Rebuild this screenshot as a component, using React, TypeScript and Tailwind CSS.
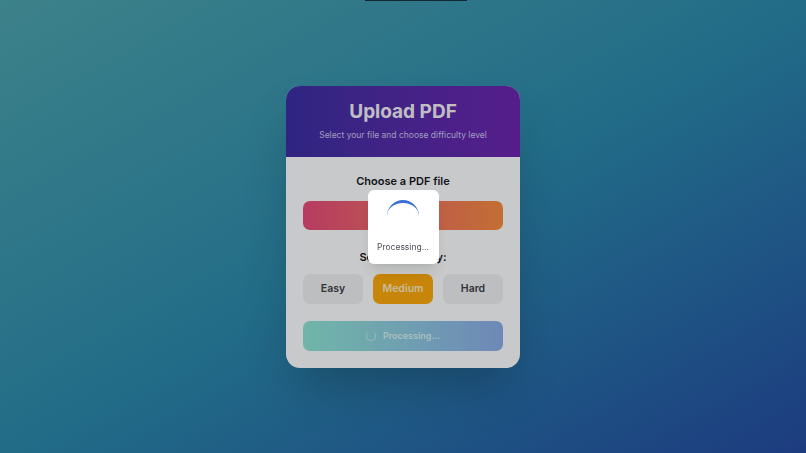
import React, { useState } from 'react';

type Level = 'easy' | 'medium' | 'hard';

const LEVELS: { id: Level; label: string }[] = [
  { id: 'easy', label: 'Easy' },
  { id: 'medium', label: 'Medium' },
  { id: 'hard', label: 'Hard' },
];

const App: React.FC = () => {
  const [level, setLevel] = useState<Level>('medium');
  const processing = true;

  return (
    <div
      className="relative flex h-[453px] w-full items-center justify-center overflow-hidden bg-gradient-to-br from-[#4ca3ad] via-[#2b88aa] to-[#254b9f]"
      style={{ fontFamily: 'Inter, "Noto Sans", sans-serif' }}
    >
      <div className="absolute left-[365px] top-0 h-px w-[102px] bg-[#15303d]" />

      <div className="w-[234px] overflow-hidden rounded-[14px] bg-[#fbfcfd] shadow-2xl">
        <div className="flex h-[71px] flex-col items-center justify-center bg-gradient-to-r from-[#3b2ea2] to-[#6b25ae] px-4">
          <h1 className="text-[19px] font-bold leading-tight text-[#f0eef6]">Upload PDF</h1>
          <p className="mt-[5px] text-[8.5px] text-[#cbc2ec]">Select your file and choose difficulty level</p>
        </div>

        <div className="flex flex-col px-[17px] pb-[17px] pt-[17px]">
          <h2 className="text-center text-[11px] font-semibold leading-[14px] text-[#16181d]">Choose a PDF file</h2>
          <div className="mt-[13px] h-[29px] rounded-[7px] bg-gradient-to-r from-[#e54a7a] to-[#f48a3f]" />

          <h3 className="mt-[20px] text-center text-[11px] font-semibold leading-[14px] text-[#16181d]">Select difficulty:</h3>
          <div className="mt-[10px] grid grid-cols-3 gap-[10px]">
            {LEVELS.map((l) => (
              <button
                key={l.id}
                onClick={() => setLevel(l.id)}
                className={`h-[30px] rounded-[7px] text-[10.5px] font-semibold ${
                  level === l.id ? 'bg-[#f9a70c] text-[#fde7c0]' : 'bg-[#eceef1] text-[#3e4149]'
                }`}
              >
                {l.label}
              </button>
            ))}
          </div>

          <button
            disabled={processing}
            className="mt-[17px] flex h-[30px] items-center justify-center gap-[7px] rounded-[7px] bg-gradient-to-r from-[#8ce4d2] to-[#8aabe6] text-[9px] font-semibold text-[#d3eef0]"
          >
            <span className="h-[10px] w-[10px] rounded-full border-[1.5px] border-[#c8e6e8] border-t-[#a3cfd2]" />
            Processing...
          </button>
        </div>
      </div>

      {processing && (
        <div className="fixed inset-0 flex items-center justify-center bg-black/20">
          <div className="flex h-[74px] w-[71px] flex-col items-center rounded-[6px] bg-white pt-[10px] shadow-lg">
            <div className="h-[32px] w-[32px] rounded-full border-t-[3px] border-[#3b6fd6]" />
            <p className="mt-[10px] text-[8.5px] leading-[11px] text-[#4b4f57]">Processing...</p>
          </div>
        </div>
      )}
    </div>
  );
};

export default App;
